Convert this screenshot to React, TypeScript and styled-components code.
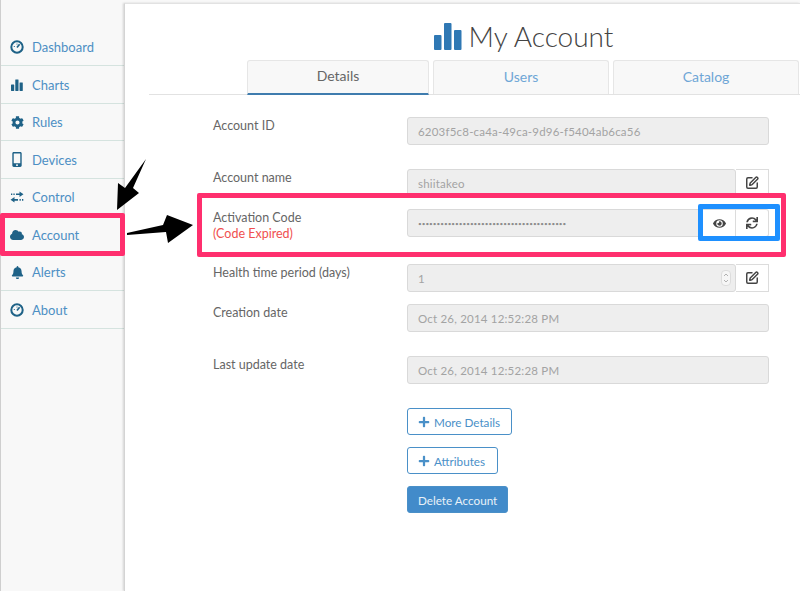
import React from "react";
import styled, { createGlobalStyle } from "styled-components";
import { FaBell, FaCloud, FaCog, FaEye, FaMobileAlt, FaPlus, FaSync } from "react-icons/fa";
import { SquarePen } from "lucide-react";

const GlobalStyle = createGlobalStyle`
  html, body {
    margin: 0;
    padding: 0;
    background: #f8f8f8;
  }
  body {
    font-family: Lato, "Open Sans", sans-serif;
    color: #555;
  }
`;

const Page = styled.div`
  position: relative;
  display: flex;
  width: 800px;
  height: 591px;
  overflow: hidden;
  background: #f8f8f8;
`;

const Sidebar = styled.nav`
  width: 124px;
  flex: none;
  padding-top: 28px;
  box-sizing: border-box;
  border-left: 1px solid #cfcfcf;
`;

const NavRow = styled.a`
  display: flex;
  align-items: center;
  gap: 8px;
  height: 37.5px;
  padding: 1px 0 0 9px;
  box-sizing: border-box;
  border-bottom: 1px solid #d5e3df;
  color: #4d8fc4;
  font-size: 13px;
  &:first-child {
    height: 38px;
  }
`;

const NavIcon = styled.span`
  display: flex;
  justify-content: center;
  width: 14px;
  font-size: 13px;
  color: #1f6287;
`;

const Main = styled.main`
  flex: 1;
  margin-top: 3px;
  background: #fff;
  border-left: 1px solid #d4d4d4;
  box-shadow: -1px 0 2px rgba(0, 0, 0, 0.15);
  border-top: 1px solid #e2e2e2;
  padding-left: 24px;
`;

const Title = styled.h1`
  display: flex;
  align-items: center;
  justify-content: center;
  gap: 7px;
  margin: 0;
  padding: 7px 0 0 98px;
  height: 56px;
  box-sizing: border-box;
  font-size: 28px;
  font-weight: 300;
  color: #444;
`;

const Tabs = styled.div`
  display: flex;
  gap: 4px;
  height: 34px;
  padding-left: 98px;
  border-bottom: 1px solid #e2e2e2;
`;

const Tab = styled.div<{ $active?: boolean; $width: number }>`
  width: ${(p) => p.$width}px;
  display: flex;
  align-items: center;
  justify-content: center;
  box-sizing: border-box;
  height: ${(p) => (p.$active ? "35px" : "34px")};
  padding-bottom: 3px;
  background: #f8f8f8;
  border: 1px solid #e6e6e6;
  border-bottom: ${(p) => (p.$active ? "2px solid #3f7cae" : "none")};
  border-radius: 3px 3px 0 0;
  font-size: 14px;
  color: ${(p) => (p.$active ? "#666" : "#6ea6d6")};
`;

const Form = styled.div`
  display: flex;
  flex-direction: column;
  padding: 22px 0 0 64px;
`;

const Row = styled.div<{ $height: number }>`
  display: grid;
  grid-template-columns: 194px 362px;
  height: ${(p) => p.$height}px;
`;

const Label = styled.div`
  padding-top: 1px;
  font-size: 12.5px;
  line-height: 16px;
  color: #666;
`;

const Expired = styled.div`
  color: #f0504f;
`;

const Field = styled.div`
  display: flex;
  height: 28px;
`;

const Input = styled.div`
  flex: 1;
  display: flex;
  align-items: center;
  justify-content: space-between;
  padding: 0 4px 0 10px;
  box-sizing: border-box;
  background: #eeeeee;
  border: 1px solid #d9d9d9;
  border-radius: 3px;
  font-size: 11.5px;
  letter-spacing: 0.2px;
  color: #a3a3a3;
  white-space: nowrap;
  overflow: hidden;
`;

const Dots = styled.span`
  font-size: 6.4px;
  letter-spacing: 0;
  color: #8c8c8c;
`;

const Addon = styled.div`
  width: 33px;
  flex: none;
  display: flex;
  align-items: center;
  justify-content: center;
  box-sizing: border-box;
  background: #fff;
  border: 1px solid #dcdcdc;
  border-left: none;
  border-radius: 0 3px 3px 0;
  font-size: 12px;
  color: #444;
  &:nth-child(2) {
    border-radius: 0;
  }
`;

const Spinner = styled.span`
  display: flex;
  align-items: center;
  justify-content: center;
  width: 8px;
  height: 14px;
  background: #f6f6f6;
  border: 1px solid #ddd;
  border-radius: 4px;
`;

const Actions = styled.div`
  display: flex;
  flex-direction: column;
  align-items: flex-start;
  gap: 12px;
  margin: 24px 0 0 194px;
`;

const Button = styled.button<{ $primary?: boolean; $width: number }>`
  display: flex;
  align-items: center;
  gap: 4px;
  width: ${(p) => p.$width}px;
  height: 27px;
  padding: 0 10px;
  box-sizing: border-box;
  border: 1px solid #4a90c8;
  border-radius: 3px;
  background: ${(p) => (p.$primary ? "#428bca" : "#fff")};
  color: ${(p) => (p.$primary ? "#e8f1f8" : "#4a90c8")};
  font-family: inherit;
  font-size: 11.7px;
  white-space: nowrap;
`;

const Overlay = styled.svg<{ $x: number; $y: number }>`
  position: absolute;
  left: ${(p) => p.$x}px;
  top: ${(p) => p.$y}px;
  pointer-events: none;
`;

const Callout = styled.div<{ $color: string; $x: number; $y: number; $w: number; $h: number; $b: number }>`
  position: absolute;
  left: ${(p) => p.$x}px;
  top: ${(p) => p.$y}px;
  width: ${(p) => p.$w}px;
  height: ${(p) => p.$h}px;
  box-sizing: border-box;
  border: ${(p) => p.$b}px solid ${(p) => p.$color};
  border-radius: 2px;
`;

const Gauge = () => (
  <svg width="14" height="14" viewBox="0 0 14 14" fill="none" stroke="#1f6287">
    <circle cx="7" cy="7" r="5.7" strokeWidth="2" />
    <path d="M7 7.5 L9.6 4.2" strokeWidth="1.7" />
    <path d="M3.8 6.5h1M7 3.6v1" strokeWidth="1" />
  </svg>
);

const Bars = ({ size, color }: { size: number; color: string }) => (
  <svg width={size} height={size} viewBox="0 0 28 28" fill={color}>
    <rect x="0" y="13" width="7.5" height="15" rx="1" />
    <rect x="10" y="1" width="7.5" height="27" rx="1" />
    <rect x="20" y="8" width="7.5" height="20" rx="1" />
  </svg>
);

const Swap = () => (
  <svg width="14" height="12" viewBox="0 0 14 12" fill="#1f6287">
    <path d="M9.5 0.5 L13.5 3.2 L9.5 6 V4 H6 V2.4 H9.5 Z" />
    <path d="M4.5 6 L0.5 8.8 L4.5 11.5 V9.7 H8 V8 H4.5 Z" />
    <path d="M1 2.4h1.3v1.6H1zM3.4 2.4h1.3v1.6H3.4zM9.5 8h1.3v1.7H9.5zM12 8h1.3v1.7H12z" />
  </svg>
);

const Chevrons = () => (
  <svg width="6" height="12" viewBox="0 0 6 12" fill="none" stroke="#aaa" strokeWidth="0.9">
    <path d="M1 4 L3 2 L5 4M1 8 L3 10 L5 8" />
  </svg>
);

const navItems = [
  { label: "Dashboard", icon: <Gauge /> },
  { label: "Charts", icon: <Bars size={12} color="#1f6287" /> },
  { label: "Rules", icon: <FaCog /> },
  { label: "Devices", icon: <FaMobileAlt size={15} /> },
  { label: "Control", icon: <Swap /> },
  { label: "Account", icon: <FaCloud size={14} /> },
  { label: "Alerts", icon: <FaBell /> },
  { label: "About", icon: <Gauge /> },
];

const editIcon = <SquarePen size={14} strokeWidth={2.5} />;

export default function App() {
  return (
    <Page>
      <GlobalStyle />
      <Sidebar>
        {navItems.map((item) => (
          <NavRow key={item.label}>
            <NavIcon>{item.icon}</NavIcon>
            {item.label}
          </NavRow>
        ))}
      </Sidebar>
      <Main>
        <Title>
          <Bars size={28} color="#2f78b4" />
          My Account
        </Title>
        <Tabs>
          <Tab $active $width={182}>Details</Tab>
          <Tab $width={176}>Users</Tab>
          <Tab $width={186}>Catalog</Tab>
        </Tabs>
        <Form>
          <Row $height={52}>
            <Label>Account ID</Label>
            <Field><Input>6203f5c8-ca4a-49ca-9d96-f5404ab6ca56</Input></Field>
          </Row>
          <Row $height={40}>
            <Label>Account name</Label>
            <Field><Input>shiitakeo</Input><Addon>{editIcon}</Addon></Field>
          </Row>
          <Row $height={55}>
            <Label>
              Activation Code
              <Expired>(Code Expired)</Expired>
            </Label>
            <Field>
              <Input><Dots>••••••••••••••••••••••••••••••••••••••••</Dots></Input>
              <Addon><FaEye size={13} /></Addon>
              <Addon><FaSync size={12} /></Addon>
            </Field>
          </Row>
          <Row $height={40}>
            <Label>Health time period (days)</Label>
            <Field>
              <Input>1<Spinner><Chevrons /></Spinner></Input>
              <Addon>{editIcon}</Addon>
            </Field>
          </Row>
          <Row $height={52}>
            <Label>Creation date</Label>
            <Field><Input>Oct 26, 2014 12:52:28 PM</Input></Field>
          </Row>
          <Row $height={28}>
            <Label>Last update date</Label>
            <Field><Input>Oct 26, 2014 12:52:28 PM</Input></Field>
          </Row>
          <Actions>
            <Button $width={105}><FaPlus size={12} />More Details</Button>
            <Button $width={91}><FaPlus size={12} />Attributes</Button>
            <Button $primary $width={101}>Delete Account</Button>
          </Actions>
        </Form>
      </Main>

      <Callout $color="#ff2f6e" $x={0} $y={213} $w={125} $h={43} $b={5} />
      <Callout $color="#ff2f6e" $x={197} $y={193} $w={589} $h={64} $b={5} />
      <Callout $color="#1e90ff" $x={698} $y={204} $w={82} $h={37} $b={5} />

      <Overlay $x={114} $y={155} width="36" height="58" viewBox="0 0 36 58">
        <path d="M32 4 L19 33 L25 38 L3 55 L4 28 L11 33 Z" fill="#000" />
      </Overlay>
      <Overlay $x={126} $y={212} width="68" height="32" viewBox="0 0 68 32">
        <path d="M1 21 L37 13 L41 3 L67 13 L42 31 L40 20 L1 23 Z" fill="#000" />
      </Overlay>
    </Page>
  );
}
